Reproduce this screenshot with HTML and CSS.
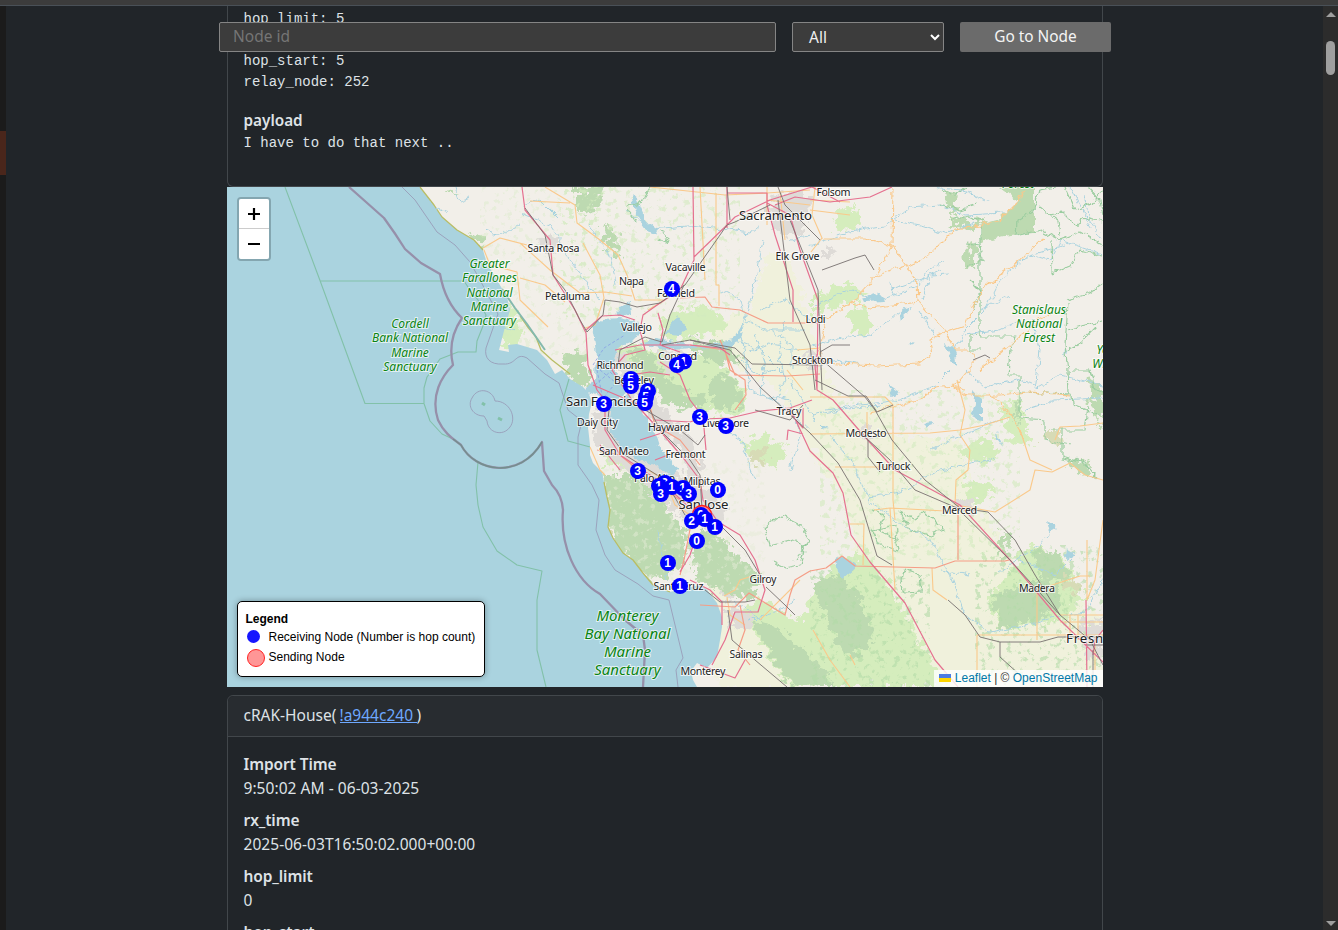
FILE: index.html
```html
<!DOCTYPE html>
<html lang="en">
<head>
<meta charset="utf-8">
<title>Node packets</title>
<link rel="stylesheet" href="styles.css">
</head>
<body>
<div class="topbar"></div>
<div class="window">
<aside class="edge"><span class="edge-mark"></span></aside>
<main class="page">
  <section class="card packet">
    <pre class="code">hop_limit: 5

hop_start: 5
relay_node: 252</pre>
    <h6 class="payload-title">payload</h6>
    <pre class="code">I have to do that next ..</pre>
  </section>

  <section class="map">
    <svg class="tiles" viewBox="227 187 876 500" width="876" height="500">
      <defs>
        <filter id="rough" x="-5%" y="-5%" width="110%" height="110%">
          <feTurbulence type="fractalNoise" baseFrequency="0.13" numOctaves="4" seed="4" result="n"/>
          <feDisplacementMap in="SourceGraphic" in2="n" scale="22" xChannelSelector="R" yChannelSelector="G"/>
        </filter>
        <filter id="wiggle" x="-5%" y="-5%" width="110%" height="110%">
          <feTurbulence type="fractalNoise" baseFrequency="0.12" numOctaves="3" seed="8" result="n"/>
          <feDisplacementMap in="SourceGraphic" in2="n" scale="8" xChannelSelector="R" yChannelSelector="G"/>
        </filter>
        <filter id="speckle" x="0" y="0" width="100%" height="100%">
          <feTurbulence type="fractalNoise" baseFrequency="0.16" numOctaves="4" seed="11" result="n"/>
          <feColorMatrix in="n" type="matrix" values="0 0 0 0 0  0 0 0 0 0  0 0 0 0 0  0 9 0 0 -5.2" result="m"/>
          <feComposite in="SourceGraphic" in2="m" operator="in"/>
        </filter>
      </defs>
      <rect class="land" x="227" y="187" width="876" height="500"/>

      <!-- farmland -->
      <path class="farm" filter="url(#rough)" d="M700 325 750 310 770 250 790 260 812 330 840 410 895 400 890 435 960 440 975 500 1010 560 1103 620 1103 687 940 687 900 600 860 560 838 490 800 435 780 390 730 360Z"/>
      <path class="farm" filter="url(#rough)" d="M700 560 730 600 790 670 800 690 720 690 700 640 720 620Z"/>

      <!-- parks and forest -->
      <g filter="url(#rough)">
        <path class="park" d="M660 322 678 308 705 306 725 318 728 330 690 340 662 337Z M610 347 640 343 660 352 690 360 710 355 730 375 748 395 740 415 700 412 670 390 640 385 618 366Z M815 295 850 283 868 296 850 303 815 315Z M848 310 866 308 875 330 852 335Z M838 208 855 206 860 228 835 232Z M826 573 865 552 890 585 920 640 948 687 790 687 765 650 740 610 760 600 800 620Z M970 445 990 435 1000 455 985 465 958 455Z M1000 405 1020 400 1032 445 1010 440Z M963 480 992 482 990 500 965 500Z M1030 545 1065 560 1085 600 1060 620 1000 630 985 600 1000 585Z M500 315 512 305 524 330 510 350 500 345Z M740 445 765 435 790 450 775 470Z M598 445 620 450 625 470 605 465Z"/>
        <path class="forest" d="M602 475 630 475 660 500 685 530 686 560 670 575 650 580 625 560 610 530Z M690 535 715 530 740 560 762 580 750 600 715 590 694 575Z M562 354 580 352 594 378 583 390 570 378Z M575 187 603 187 600 205 584 215 575 205Z M605 225 620 235 618 258 606 245Z M630 350 650 350 665 375 680 390 708 400 700 410 670 405 645 385Z M690 340 730 345 740 360 710 365Z M708 375 735 378 742 405 715 412Z M470 234 485 233 490 242 482 246 472 240Z M444 191 460 194 452 198Z M812 580 840 575 860 595 875 640 850 660 830 630Z M750 620 780 630 820 665 835 687 790 685Z M1000 530 1010 535 1008 560 1000 555Z M993 595 1050 575 1060 605 1040 620 1000 630Z M1020 400 1020 425 1012 410Z"/>
        <path class="forest" d="M944 189 958 195 955 215 945 205Z M966 245 976 240 974 270 967 265Z M950 218 985 223 970 230 950 225Z M1090 380 1103 378 1103 430 1092 405Z M1065 457 1088 462 1090 478 1075 470Z M1030 550 1060 555 1070 580 1045 580Z"/>
        <path class="olive" d="M1045 430 1063 430 1058 445 1045 440Z M1062 578 1078 580 1080 592 1063 590Z M750 450 766 448 764 466 752 463Z M600 520 605 525 610 545 603 540Z"/>
      </g>
      <path class="forest" filter="url(#wiggle)" d="M1000 187 1034 187 1034 233 1010 236 980 242V224L1000 218 1018 202Z"/>
      <rect class="speck-forest" filter="url(#speckle)" x="810" y="570" width="120" height="117"/>
      <rect class="speck-forest" filter="url(#speckle)" x="975" y="545" width="128" height="140"/>
      <rect class="speck-park" filter="url(#speckle)" x="560" y="187" width="180" height="130"/>
      <rect class="speck-land" filter="url(#speckle)" x="596" y="460" width="170" height="130"/>
      <rect class="speck-park" filter="url(#speckle)" x="820" y="390" width="200" height="170"/>
      <rect class="speck-park faint" filter="url(#speckle)" x="480" y="187" width="120" height="170"/>

      <!-- towns -->
      <path class="town" filter="url(#rough)" d="M774 195 800 190 812 200 802 232 780 235 766 215Z M604 345 626 355 640 380 660 405 695 440 702 480 730 510 715 530 685 520 660 500 625 470 600 450 590 420 600 400 625 410 640 435 665 470 690 480 680 450 650 420 625 390Z M807 350 822 352 822 370 808 370Z M540 238 558 236 556 255 545 256Z M955 500 975 500 973 512 958 510Z M1080 620 1103 622 1103 660 1085 655Z M860 425 876 428 875 440 860 438Z M725 610 755 612 750 630 730 625Z M660 350 690 355 680 372 665 370Z M720 590 735 595 725 604Z M822 247 835 250 830 260 822 256Z"/>

      <!-- ocean -->
      <path class="water" d="M227 187 420 187 434 205 442 217 457 230 474 240 483 250 487 264 494 275 507 297 510 310 505 327 499 350 509 352 508 345 517 344 527 347 537 350 547 360 555 374 562 370 570 379 583 387 588 392 592 402 589 414 588 427 590 445 590 455 593 463 602 472 604 482 607 497 610 510 608 527 613 538 623 553 633 560 643 573 653 585 670 592 687 588 700 585 707 590 717 603 722 617 722 627 720 640 717 657 707 668 697 663 691 671 693 680 697 687 227 687Z"/>
      <path class="coast" d="M420 187 434 205 442 217 457 230 474 240 483 250M520 316 527 326 536 337 541 350 552 360 570 374M604 482 607 497 610 510 608 527 613 538 623 553 633 560 643 573 653 585 670 592"/>
      <path class="tomales" d="M502 289 515 308 527 324 545 350"/>
      <!-- bays and lakes -->
      <g filter="url(#wiggle)">
        <path class="water" d="M593 327 602 319 620 318 637 322 641 333 632 342 618 348 615 360 604 367 597 359 596 343Z M595 360 610 365 622 380 630 392 614 400 600 397 586 391 594 378Z M611 401 630 396 645 415 655 430 660 446 668 460 679 470 672 476 660 467 645 462 630 454 620 446 613 435 609 420Z M639 343 655 339 680 343 705 345 733 340 745 320 739 340 728 349 700 347 670 350 650 346Z M664 334 672 322 678 317 686 327 679 336Z M617 306 631 302 632 314 618 316Z M661 472 675 476 672 482 662 478Z"/>
        <path class="water" d="M631 194 638 200 648 223 658 230 656 234 646 230 636 215Z M862 298 881 292 885 301 864 302Z M889 281 896 297 891 290Z M900 311 912 307 907 313 902 322Z M945 345 955 350 958 366 950 358Z M972 391 982 398 982 421 970 415 976 403Z M887 383 899 391 892 395Z M924 424 933 423 929 429Z M997 431 1003 447 998 440Z M835 561 843 555 856 568 843 579 837 573Z M1047 520 1057 527 1050 532Z M1067 547 1074 555 1066 560Z M1065 348 1068 353 1064 357Z M820 425 827 428 820 430Z M909 340 914 342 910 344Z"/>
      </g>

      <!-- rivers -->
      <g class="river" filter="url(#wiggle)">
        <path d="M810 245 850 232 885 226 910 207 940 205 965 215 1005 213M895 220 920 225 945 233 975 222M930 187 962 190 990 202M815 306 850 290 870 297M881 300 920 285 927 270 945 262M892 290 925 278 940 270M922 300 930 275 948 274M812 346 840 338 870 335 900 312M825 410 860 405 900 400 935 385 950 370M812 415 840 410 880 405"/>
        <path d="M955 350 965 330 985 310 1000 280 1030 255 1065 245M980 310 1010 295M965 335 1000 330 1020 320M1030 255 1050 260 1060 240 1103 255M920 310 935 335M1035 390 1040 350 1030 320M1035 390 1060 375 1103 385M965 370 985 388 1015 380 1035 385M1025 410 1055 400 1103 398M1085 195 1090 220 1103 240M1070 187 1085 215 1090 230"/>
        <path d="M828 434 850 460 870 500 895 520 930 540 950 575 965 615 990 632 1030 625 1050 618 1085 612 1103 580M870 497 900 492 940 470 995 458M940 570 970 575M1000 572 1040 545 1055 525M1020 560 1055 575 1075 555M930 450 950 440 1000 420"/>
        <path d="M520 213 550 225 560 240 570 260 600 300M522 205 540 200 560 220M588 225 610 255 615 285M415 187 435 208 448 213M455 187 460 202 470 198M485 230 500 235 520 225M485 310 495 325 515 330M625 210 650 230 700 226 750 233 760 225M763 240 756 280 745 320M735 340 760 350 790 380 815 420M720 290 740 300 745 320 765 330 805 330M740 330 750 390 775 400 810 430M760 310 785 300 810 320M750 350 770 345 800 350M762 395 790 400 800 435 790 470M790 240 810 235M658 530 662 555 668 580M725 430 740 440 755 480"/>
        <path d="M775 400 785 380 778 345 785 320M740 360 760 375 775 370M755 335 765 365 760 395M770 330 792 345 792 370M820 365 835 360 860 365M750 620 780 610 795 600M735 600 760 620"/>
      </g>

      <!-- forest boundaries -->
      <g class="green-line" filter="url(#wiggle)">
        <path d="M980 225V335L970 336V350H980M980 336 1015 336 1010 350 1008 375H1020V418L1045 420V440L1070 445M1020 392 1072 394 1073 405 1100 415M1069 394 1068 370 1065 345 1068 303M1067 300 1090 293 1103 283M1052 240 1053 273 1070 266 1080 250 1103 256M1016 236 1017 220 1034 210 1040 190 1055 187M1017 236 1040 230 1060 240 1080 232 1103 245M1050 215 1062 212 1075 225 1085 218 1103 222M1068 330 1085 325 1103 320M1065 187 1075 210 1090 205 1103 190M1088 187 1100 200 1103 215M1040 207 1058 220 1060 235M1067 350 1080 343 1095 327M1070 370 1090 370 1095 390 1103 392M1050 430 1085 430 1088 405M1062 430V458L1082 462 1098 478"/>
        <path d="M942 190 955 195 965 187M940 205 960 210 975 205M948 220 970 216 985 222M965 243 980 245 982 260 967 268M970 280 980 290 973 310M627 207 640 203 650 187M627 210 635 222 628 212M660 232 669 236 665 243 658 240M773 562 785 568 800 565 805 545 790 540 770 545 765 528 780 515 800 525 810 540 795 560M871 510 885 515 878 530 898 540M900 512 915 520 925 512 943 530 930 535 910 530ZM903 568 920 575 922 592 905 593 901 580ZM872 530 880 545 898 550 895 525ZM1063 456 1085 462 1098 480"/>
      </g>

      <!-- marine boundaries -->
      <path class="sanctuary" d="M285 187 320 280.500 365 403.500H424L430 421 442 434 455 440M320 281H464L470 290 478 300 486 315 483 326 477 341 476 352H458L440 359 427 377 424 388V403M478 462 476 485 478 505 483 527 497 551 517 565 542 571 537 600 537 650 546 687M569 379 560 410 568 441 590 447"/>
      <path class="border" d="M349 187 366 202 384 218Q395 233 405 249L421 263 440 274Q445 302 462 318Q447 340 453 365C442 376 430 395 438 420C445 435 455 440 461 445C475 472 520 480 542 442L544 471 552 485Q562 495 563 510C560 545 575 580 600 594L625 620 643 635 645 650 643 687"/>
      <path class="border-deep" d="M453 439 461 445C475 472 520 480 542 442"/>
      <path class="border-thin" d="M402 187 415 200 437 232 455 245 470 262 480 280 498 314 486 348C484 358 490 365 503 364C517 365 515 352 527 358L545 374 559 383 568 410 582 421 578 437 578 465 592 485 599 500 596 530 605 555 615 570 638 584 653 596 669 600 683 658 676 670 678 687"/>
      <path class="border-thin" d="M484 416C473 416 467 406 472 398C478 386 493 390 495 401C510 401 517 418 510 427C503 437 488 433 487 421Z"/>
      <path class="sanctuary islands" d="M482 403 485 405M498 418 502 420"/>
      <path class="ferry" d="M593 365 604 348 625 335M596 365 603 400M600 370 615 382M595 385 610 372 630 390M604 397 614 385"/>

      <!-- primary roads -->
      <g class="primary">
        <path d="M483 248 500 238 527 245M484 250 490 265 517 272 520 300 548 327M520 278 545 285 565 302M520 243 550 270 580 293 605 292 632 296M545 187 575 205 577 223 600 240 618 255 627 275 635 300 665 300M530 201 550 202 570 203M583 243 600 275 604 298 595 325 585 328M650 187 725 195 767 193 810 190M716 193V285H719V306M700 187 705 280M767 187V225M767 200 810 205M780 192 785 240M815 187 812 215 822 238 811 252M810 200 850 202M810 210 850 215"/>
        <path filter="url(#wiggle)" d="M893 187 892 245 910 270 917 283 918 302 945 332 955 350 970 350 977 360 960 380 953 387 965 390M820 238 865 238 892 246M892 246 880 265 877 275 855 300 825 320 818 365M878 275 908 265 930 255 950 235 955 228 980 225 1000 220 1018 202 1025 190M853 303 870 308 918 302M945 332 965 325 970 313 982 290 1000 275 1020 262 1030 250 1044 238M945 332 930 340 932 355 920 364 875 366 820 363M960 380 955 385 935 387 920 400 870 412M953 387 965 395 1000 395 1030 392 1070 395M990 393 1010 415 1025 440M980 369 1010 345 1040 320 1050 314"/>
        <path d="M810 434 930 433 960 430 985 425 1010 417M810 397H885L893 405V425L893 500 895 520M867 412V433M835 467 860 467 892 467M957 380 965 410 960 435 970 450 968 470 956 480 955 505M874 510 890 508 945 511M956 505 995 512 1030 490 1035 470 1052 472 1070 463 1085 475 1103 480M850 524H864L863 565M890 508 895 590M932 568 933 590 947 600M977 635H1090M977 635V687M1037 590V640M1037 590 1080 576H1090M1087 540V600M1060 615H1103M1060 622H1103M1070 615V635M1078 615V640M1060 635H1103M1095 640V670M1103 520 1095 580 1087 600M1055 440 1060 427 1080 426 1103 423M1020 430 1030 460 1052 470"/>
        <path d="M813 630 830 660 850 687M724 596 735 590 740 580 755 575 765 580M727 597 730 615 745 625M590 447 600 470 605 475M648 310 665 300M797 350 820 348M787 370 803 390M855 665 850 655M648 470 665 480 675 505 690 515M760 620 800 580"/>
      </g>
      <!-- trunk roads -->
      <path class="trunk" d="M680 298 705 297 712 307 740 310 768 323 818 323M690 345 725 350 730 370 745 380 746 395 735 410M720 340 735 375 787 376 820 374M695 502 688 540 684 560 680 575M700 605 735 607 749 593 785 615 790 595 795 580 810 571M810 571 826 568 842 556 855 566 935 568 955 561H1005L1009 560M958 505V560M597 450 620 455 650 480 680 500M648 400 655 425 680 440 700 465M740 605 745 630 738 650 750 665"/>
      <!-- motorways -->
      <g class="motorway">
        <path d="M522 187 525 210 550 240 553 275 575 310 586 333 588 365 597 390 605 400 605 430 620 455 665 485 690 508 715 520 740 535 755 560 765 590 758 612 735 612 725 640 712 665"/>
        <path d="M693 187 694 260 680 290 660 303 643 315 640 330 645 350 625 355 612 370 632 400 655 425 685 460 700 480 703 500 720 525M694 257 727 225 735 217 770 200 812 187M727 187 727 228M727 193H767V205L775 235 793 290 793 322M767 203 790 215 800 250 818 300 817 390 833 400 865 437 895 470 960 505 1010 560 1060 620 1103 662M775 205 795 197 830 202 870 197 892 187M658 313 663 330 660 345 680 352M615 350 640 345 690 345 720 348 730 355M660 362 680 375 690 400 703 417 706 450M630 375 650 372 670 375M703 419 730 418 760 411 790 408 812 400M803 408 803 428 787 410M790 408 810 451 833 473 843 493 851 535 870 562 905 603 935 660 958 687M817 390 815 365 818 350M586 330 602 316 620 315 635 320M593 385 640 405M655 420 690 422 705 417M640 440 665 432 670 425M655 460 668 455M620 470 600 445M695 540 690 555 680 572M690 580 710 590 722 602 722 625M1086 600 1087 687M1103 630 1095 640 1093 655M700 665 735 678 745 660M787 440 788 430 803 434M812 187 840 202"/>
      </g>
      <!-- railways -->
      <g class="rail">
        <path d="M525 208 545 235 553 275 565 290 580 320 587 332 603 315 605 300 620 302 637 307 660 303 685 285 727 225 735 222 770 205M684 285 670 315 662 342 655 340 645 337 620 350 618 365M610 400 607 430 625 455 665 480 685 515M645 400 660 430 690 460 700 475 702 510 720 525 745 550 763 580M645 410 680 430 698 445 705 435M690 340 730 350 760 387 785 410 810 433 838 463 860 500 877 556 892 565M662 345 690 340 735 348 752 364 818 365M778 200 790 300 810 345 815 390M790 220 818 290 822 390M778 187 785 205 820 240M822 270 855 258 865 255 874 270M820 352 832 345H850M822 360 865 397 875 410 892 440 925 480 960 508 988 512 1015 540 1035 575 1060 615 1090 640 1103 665M815 380 848 396H866L877 412 893 405M868 440V457L880 472M727 187 730 220M865 437 890 460 915 490 957 508 1010 560 1060 615M948 600 965 615 980 637 1000 642H1040L1058 637H1103M1000 642V657L1020 675M728 610 732 640 755 660 787 687M705 590 720 602 745 602 755 600M766 587 785 605 795 615M973 360 985 355 990 358M1087 645H1103M1093 650V687M755 410 790 420 803 405"/>
      </g>

      <!-- place names -->
      <g class="place">
        <text x="833.500" y="196" textLength="34">Folsom</text>
        <text x="553.500" y="252" textLength="52">Santa Rosa</text>
        <text x="797.500" y="259.500" textLength="44">Elk Grove</text>
        <text x="685.500" y="271" textLength="40">Vacaville</text>
        <text x="631.500" y="285" textLength="25">Napa</text>
        <text x="567.500" y="300" textLength="45">Petaluma</text>
        <text x="676" y="296.500" textLength="38">Fairfield</text>
        <text x="636.500" y="331" textLength="31">Vallejo</text>
        <text x="815.500" y="323" textLength="20">Lodi</text>
        <text x="812.500" y="364" textLength="41">Stockton</text>
        <text x="677.500" y="359.500" textLength="39">Concord</text>
        <text x="620" y="369" textLength="47">Richmond</text>
        <text x="634" y="384" textLength="40">Berkeley</text>
        <text x="597.500" y="425.500" textLength="41">Daly City</text>
        <text x="669" y="430.500" textLength="42">Hayward</text>
        <text x="725.500" y="427" textLength="47">Livermore</text>
        <text x="789" y="414.500" textLength="25">Tracy</text>
        <text x="866" y="437" textLength="41">Modesto</text>
        <text x="624" y="455" textLength="50">San Mateo</text>
        <text x="685.500" y="458" textLength="40">Fremont</text>
        <text x="893.500" y="470" textLength="34">Turlock</text>
        <text x="654.500" y="481.500" textLength="41">Palo Alto</text>
        <text x="702" y="484.500" textLength="37">Milpitas</text>
        <text x="959.500" y="514" textLength="35">Merced</text>
        <text x="763" y="582.500" textLength="27">Gilroy</text>
        <text x="678.500" y="589.500" textLength="50">Santa Cruz</text>
        <text x="1037" y="592" textLength="36">Madera</text>
        <text x="746" y="657.500" textLength="33">Salinas</text>
        <text x="703" y="674.500" textLength="45">Monterey</text>
        <g class="city">
          <text x="775.500" y="220" textLength="73">Sacramento</text>
          <text x="606" y="406" textLength="80">San Francisco</text>
          <text x="703.500" y="508.500" textLength="50">San Jose</text>
          <text x="1089" y="643" textLength="46">Fresno</text>
        </g>
      </g>
      <g class="reserve">
        <text x="489.500" y="268">Greater</text><text x="489.500" y="282.400">Farallones</text><text x="489.500" y="296.800">National</text><text x="489.500" y="311">Marine</text><text x="489.500" y="325.400">Sanctuary</text>
        <text x="410" y="328">Cordell</text><text x="410" y="342.400">Bank National</text><text x="410" y="356.800">Marine</text><text x="410" y="371">Sanctuary</text>
        <text x="1039" y="313.500">Stanislaus</text><text x="1039" y="327.800">National</text><text x="1039" y="342">Forest</text>
        <text x="1018" y="188">Forest</text>
        <text x="1120" y="353.500">Yosemite</text><text x="1121" y="367.800">Wilderness</text>
        <g class="reserve-big">
          <text x="627.500" y="621">Monterey</text><text x="627.500" y="639">Bay National</text><text x="627.500" y="656.500">Marine</text><text x="627.500" y="674.500">Sanctuary</text>
        </g>
      </g>

      <!-- node markers -->
      <circle class="sender" cx="702" cy="515" r="9.500"/>
      <g class="node">
        <circle cx="672" cy="289" r="8"/><text x="671.500" y="293.200">4</text>
        <circle cx="684" cy="361.500" r="8"/><text x="683.500" y="365.700">1</text>
        <circle cx="677" cy="365" r="8"/><text x="676.500" y="369.200">4</text>
        <circle cx="631" cy="379" r="8"/><text x="630.500" y="383.200">5</text>
        <circle cx="631" cy="386" r="8"/><text x="630.500" y="390.200">5</text>
        <circle cx="648" cy="391" r="8"/><text x="647.500" y="395.200">2</text>
        <circle cx="646" cy="397" r="8"/><text x="645.500" y="401.200">5</text>
        <circle cx="645" cy="403" r="8"/><text x="644.500" y="407.200">5</text>
        <circle cx="604" cy="404" r="8"/><text x="603.500" y="408.200">3</text>
        <circle cx="700" cy="417" r="8"/><text x="699.500" y="421.200">3</text>
        <circle cx="726" cy="426" r="8"/><text x="725.500" y="430.200">3</text>
        <circle cx="638" cy="471" r="8"/><text x="637.500" y="475.200">3</text>
        <circle cx="665" cy="483" r="8"/><text x="664.500" y="487.200">2</text>
        <circle cx="659" cy="486" r="8"/><text x="658.500" y="490.200">1</text>
        <circle cx="672" cy="487" r="8"/><text x="671.500" y="491.200">1</text>
        <circle cx="661" cy="494" r="8"/><text x="660.500" y="498.200">3</text>
        <circle cx="683" cy="488" r="8"/><text x="682.500" y="492.200">1</text>
        <circle cx="689" cy="494" r="8"/><text x="688.500" y="498.200">3</text>
        <circle cx="718" cy="490" r="8"/><text x="717.500" y="494.200">0</text>
        <circle cx="701" cy="515" r="8"/><text x="700.500" y="519.200">0</text>
        <circle cx="692" cy="521" r="8"/><text x="691.500" y="525.200">2</text>
        <circle cx="705" cy="519" r="8"/><text x="704.500" y="523.200">1</text>
        <circle cx="715" cy="527" r="8"/><text x="714.500" y="531.200">1</text>
        <circle cx="697" cy="541" r="8"/><text x="696.500" y="545.200">0</text>
        <circle cx="668" cy="563" r="8"/><text x="667.500" y="567.200">1</text>
        <circle cx="680" cy="586" r="8"/><text x="679.500" y="590.200">1</text>
      </g>
    </svg>
    <div class="zoom">
      <button class="zoom-btn" aria-label="Zoom in"><svg width="12" height="12"><path d="M6 0v12M0 6h12"/></svg></button>
      <button class="zoom-btn" aria-label="Zoom out"><svg width="12" height="12"><path d="M0 6h12"/></svg></button>
    </div>
    <div class="legend">
      <b>Legend</b>
      <div class="legend-row"><i class="dot receiving"></i>Receiving Node (Number is hop count)</div>
      <div class="legend-row last"><i class="dot sending"></i>Sending Node</div>
    </div>
    <div class="attribution"><svg width="12" height="8"><path fill="#4c7be1" d="M0 0h12v4H0z"/><path fill="#ffd500" d="M0 4h12v4H0z"/></svg> <a>Leaflet</a> | © <a>OpenStreetMap</a></div>
  </section>

  <section class="card node-card">
    <header class="card-head"><span class="name">cRAK-House(</span><a class="node-link">!a944c240&nbsp;</a><span>)</span></header>
    <dl class="fields">
      <dt>Import Time</dt><dd>9:50:02 AM - 06-03-2025</dd>
      <dt>rx_time</dt><dd>2025-06-03T16:50:02.000+00:00</dd>
      <dt>hop_limit</dt><dd>0</dd>
      <dt>hop_start</dt><dd>0</dd>
    </dl>
  </section>

  <form class="search">
    <input class="field" placeholder="Node id">
    <div class="field select"><span>All</span><svg width="10" height="7"><path d="M1 1l4 4 4-4"/></svg></div>
    <button class="go" type="button">Go to Node</button>
  </form>
</main>
<div class="scrollbar"><i class="arrow up"></i><i class="thumb"></i><i class="arrow down"></i></div>
</div>
</body>
</html>
```

FILE: styles.css
```css
* { box-sizing: border-box; }
body { margin: 0; height: 930px; overflow: hidden; background: #212529; color: #dee2e6; font: 16px/24px "Noto Sans", "Open Sans", sans-serif; }
.topbar { height: 6px; background: #3c3c3c; border-bottom: 1px solid #495057; }
.window { display: grid; grid-template-columns: 6px 1fr 15px; height: 924px; }
.edge { background: #1b1b1b; padding-top: 125px; }
.edge-mark { display: block; height: 44px; background: #4a261b; }
.page { position: relative; overflow: hidden; padding: 0 220px 0 221px; }

.card { border: 1px solid #42474b; border-radius: 6px; background: #212529; }
.packet { height: 181px; border-top: 0; border-radius: 0 0 6px 6px; padding: 3px 15.5px 0; }
.code { margin: 0; font: 14px/21px "Liberation Mono", monospace; }
.payload-title { margin: 17px 0 3px; font-size: 15.3px; line-height: 20px; font-weight: 600; }

.map { position: relative; height: 500px; margin-bottom: 8px; overflow: hidden; font: 12px/18px "Liberation Sans", Arial, sans-serif; color: #000; }
.tiles { display: block; }
.tiles path { stroke-linejoin: round; }
.land { fill: #f2efe9; }
.water { fill: #aad3df; }
.farm { fill: #f0f1dc; }
.park { fill: #d5edbd; }
.forest { fill: #bddab1; }
.olive { fill: #d7dbb6; }
.town { fill: #dedbd7; }
.speck-forest { fill: #b3dba8; opacity: .6; }
.speck-land { fill: #e6ecd7; opacity: .5; }
.speck-park { fill: #d3ebbf; opacity: .6; }
.faint { opacity: .35; }
.coast { fill: none; stroke: #b9bd65; stroke-width: 1.3; }
.tomales { fill: none; stroke: #84b9ae; stroke-width: 2; }
.river path { fill: none; stroke: #aad3df; stroke-width: 1; }
.green-line path { fill: none; stroke: #9bcda0; stroke-width: 1.2; }
.sanctuary { fill: none; stroke: #82c1a9; stroke-width: 1.1; }
.islands { stroke-width: 3; }
.border { fill: none; stroke: #9690aa; stroke-width: 2.3; }
.border-deep { fill: none; stroke: #748f8e; stroke-width: 1.5; }
.border-thin { fill: none; stroke: #999db9; stroke-width: .9; }
.ferry { fill: none; stroke: #88a0e5; stroke-width: .8; stroke-dasharray: 3 2; }
.primary path { fill: none; stroke: #fac98b; stroke-width: 1.1; }
.trunk { fill: none; stroke: #f59d86; stroke-width: 1.2; }
.motorway path { fill: none; stroke: #e5708f; stroke-width: 1.2; }
.rail path { fill: none; stroke: #77716f; stroke-width: .9; }
.place text { font: 10.7px "Noto Sans", sans-serif; text-anchor: middle; fill: #222; stroke: #fffb; stroke-width: 2px; paint-order: stroke; }
.place .city text { font-size: 13.2px; }
.reserve text { font: italic 12px "Noto Sans", sans-serif; text-anchor: middle; fill: #0b8413; stroke: #fffa; stroke-width: 2px; paint-order: stroke; }
.reserve .reserve-big text { font-size: 15px; }
.node circle { fill: #00f; }
.node text { font: bold 12px "Liberation Sans", Arial, sans-serif; text-anchor: middle; fill: #fff; }
.sender { fill: #ff9696; stroke: #f22; stroke-width: 1.5; }

.zoom { position: absolute; left: 10px; top: 10px; width: 34px; border: 2px solid #84a6b0; border-radius: 4px; overflow: hidden; }
.zoom-btn { display: flex; align-items: center; justify-content: center; width: 30px; height: 30px; padding: 0; border: 0; background: #fff; }
.zoom-btn + .zoom-btn { border-top: 1px solid #ccc; margin-top: -1px; height: 31px; padding-bottom: 1px; }
.zoom-btn path { stroke: #000; stroke-width: 2.2; }
.legend { position: absolute; left: 10px; top: 414px; width: 248px; height: 76px; padding: 8px 7.5px 0; border: 1px solid #000; border-radius: 5px; background: #fff; box-shadow: 0 0 6px #0005; }
.legend b { display: block; height: 18px; line-height: 19px; }
.legend-row { display: flex; align-items: center; height: 18px; white-space: nowrap; }
.legend-row.last { height: 22px; }
.dot { flex: none; border-radius: 50%; }
.receiving { width: 13px; height: 13px; margin: -2px 8.5px 0 1.5px; background: #1616ff; }
.sending { width: 18px; height: 18px; margin: 2px 4px 0 1px; background: #ff9696; border: 1px solid #f22; }
.attribution { position: absolute; right: 0; bottom: 0; height: 17px; padding: 0 5.5px 0 5px; line-height: 17px; background: #fffc; color: #333; white-space: nowrap; }
.attribution a { color: #0078a8; }

.node-card { height: 300px; }
.card-head { height: 41px; padding: 7px 15.5px; display: flex; background: #282c30; border-bottom: 1px solid #42474b; border-radius: 6px 6px 0 0; font-size: 15.5px; }
.card-head .name { width: 96px; }
.node-link { color: #6ea8fe; text-decoration: underline; width: 77px; overflow: hidden; white-space: nowrap; }
.fields { margin: 0; padding: 15px 15.5px; font-size: 15.5px; }
.fields dt { font-weight: 600; letter-spacing: -.1px; }
.fields dd { margin: 0 0 8px; letter-spacing: .05px; }

.search { position: absolute; left: 213px; top: 16px; width: 892px; height: 30px; margin: 0; display: grid; grid-template-columns: 557px 152px 151px; gap: 16px; }
.field { height: 30px; border: 1px solid #858585; border-radius: 2px; background: #3c3c3c; color: #f0f0f0; font: 15.5px/27px "Noto Sans", sans-serif; padding: 0 13px 2px; }
.field::placeholder { color: #757575; opacity: 1; }
.select { display: flex; align-items: center; justify-content: space-between; padding: 0 3px 0 16px; }
.select path { fill: none; stroke: #fff; stroke-width: 2; }
.go { border: 0; border-radius: 2px; background: #6b6b6b; color: #f4f4f4; font: 15.4px "Noto Sans", sans-serif; padding: 0 0 2px; }
.scrollbar { display: flex; flex-direction: column; align-items: center; background: #2c2c2c; padding: 6px 0 4px; }
.arrow { border: 5px solid transparent; }
.up { border-top: 0; border-bottom: 5px solid #9f9f9f; }
.down { margin-top: auto; border-bottom: 0; border-top: 5px solid #9f9f9f; }
.thumb { width: 9px; height: 34px; margin-top: 24px; border-radius: 5px; background: #9f9f9f; }
```
